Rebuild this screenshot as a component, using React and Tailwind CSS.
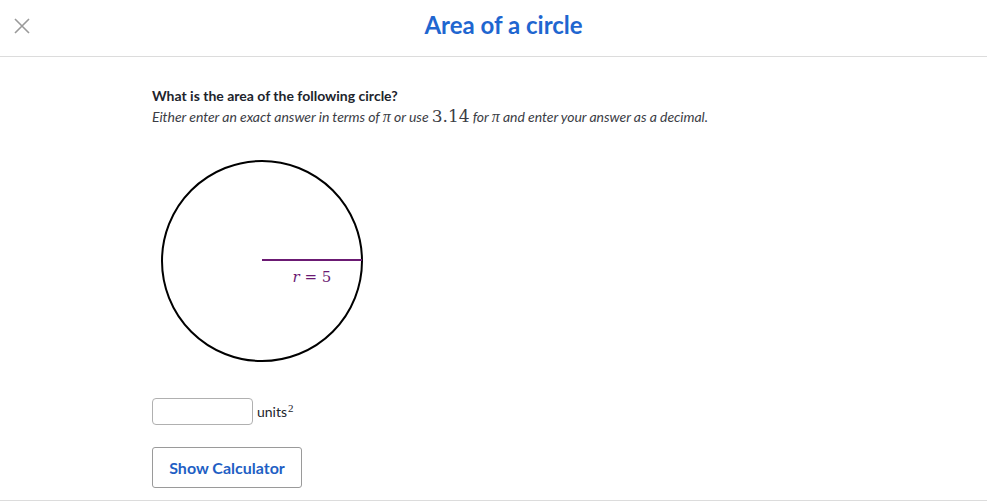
import React from 'react';

const serif = { fontFamily: '"Liberation Serif", "DejaVu Serif", serif' };

const CircleFigure = () => (
  <svg width="212" height="212" viewBox="0 0 212 212" className="block">
    <circle cx="106" cy="106" r="100" fill="none" stroke="#000" strokeWidth="2" />
    <line x1="106" y1="105" x2="206" y2="105" stroke="#6b1a73" strokeWidth="2" />
    <text x="156" y="127" textAnchor="middle" fill="#6b1a73" fontSize="15" fontFamily="'DejaVu Serif', serif">
      <tspan fontStyle="italic">r</tspan> = 5
    </text>
  </svg>
);

export default function App() {
  return (
    <div className="h-[504px] bg-white flex flex-col" style={{ fontFamily: 'Lato, "Liberation Sans", sans-serif' }}>
      <header className="h-[57px] shrink-0 border-b border-[#dcdcdc] flex items-center relative">
        <button className="absolute left-[12px] top-[16px] w-[20px] h-[20px] text-[#9a9a9a]">
          <svg viewBox="0 0 20 20" width="20" height="20" fill="none" stroke="currentColor" strokeWidth="1.6">
            <path d="M3 3 L17 17 M17 3 L3 17" />
          </svg>
        </button>
        <h1 className="w-full text-center text-[24px] font-bold text-[#1f66d0] leading-none pl-[20px] -translate-y-[3px]">
          Area of a circle
        </h1>
      </header>

      <main className="flex-1 pl-[152px] pt-[30px] text-[#21242c]">
        <p className="text-[14px] font-bold leading-[18px]">What is the area of the following circle?</p>
        <p className="text-[14px] italic leading-[18px] mt-[2px] text-[#3b3d45] tracking-[-0.05px]">
          Either enter an exact answer in terms of{' '}
          <span className="text-[16px]" style={serif}>π</span> or use{' '}
          <span className="text-[17px] not-italic" style={{ fontFamily: '"DejaVu Serif", serif' }}>3.14</span> for{' '}
          <span className="text-[16px]" style={serif}>π</span> and enter your answer as a decimal.
        </p>

        <div className="mt-[29px] ml-[4px]">
          <CircleFigure />
        </div>

        <div className="mt-[31px] flex items-center gap-[4px]">
          <input className="w-[101px] h-[27px] border border-[#b0b0b0] rounded-[4px] outline-none" />
          <span className="text-[14px] text-[#21242c]">
            units<sup className="text-[11px] -top-[0.45em] ml-[1px]" style={serif}>2</sup>
          </span>
        </div>

        <button className="mt-[22px] w-[150px] h-[41px] border border-[#9a9a9a] rounded-[3px] text-[16px] font-bold text-[#1f5fc4] bg-white">
          Show Calculator
        </button>
      </main>

      <div className="h-[4px] border-t border-[#dcdcdc] shrink-0" />
    </div>
  );
}
